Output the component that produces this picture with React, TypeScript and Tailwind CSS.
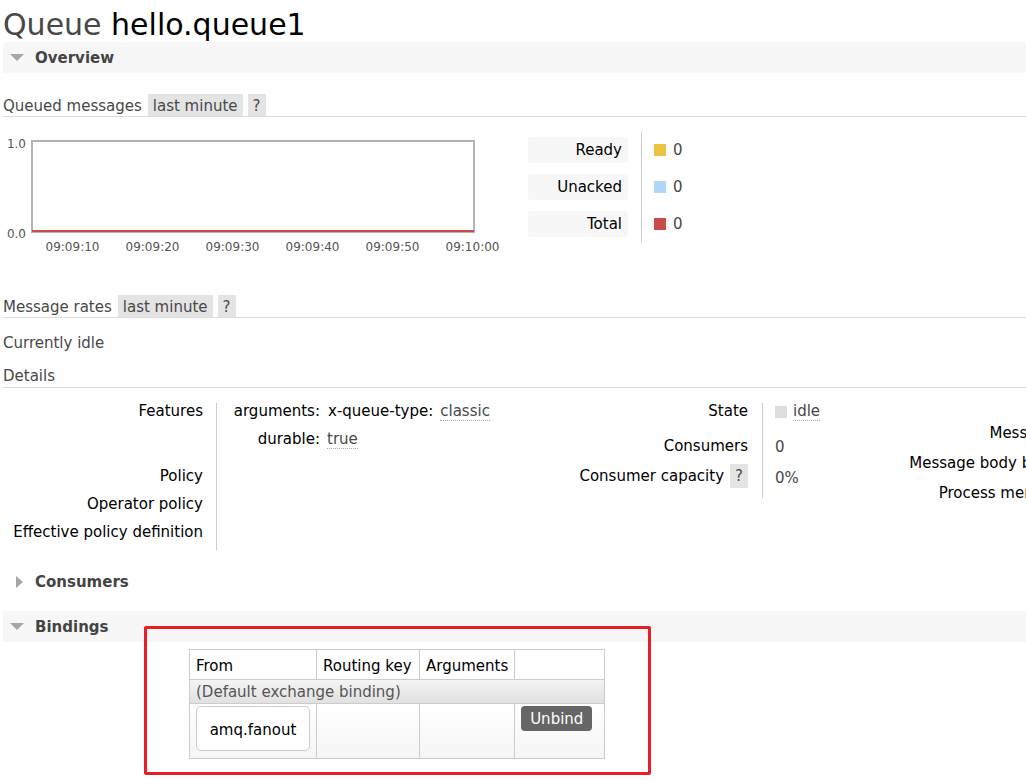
import React from "react";

const legend = [
  { label: "Ready", color: "bg-[#edc240]" },
  { label: "Unacked", color: "bg-[#afd8f8]" },
  { label: "Total", color: "bg-[#cb4b4b]" },
];

const ticks = ["09:09:10", "09:09:20", "09:09:30", "09:09:40", "09:09:50", "09:10:00"];

function DownArrow() {
  return (
    <svg width="14" height="8" viewBox="0 0 14 8" className="shrink-0">
      <path d="M0 0 L14 0 L7 7 Z" fill="#a6a6a6" />
    </svg>
  );
}

function RightArrow() {
  return (
    <svg width="8" height="12" viewBox="0 0 8 12" className="shrink-0">
      <path d="M0 0 L7 6 L0 12 Z" fill="#a6a6a6" />
    </svg>
  );
}

function Badge({ children }: { children: React.ReactNode }) {
  return <span className="h-[22px] bg-[#e4e4e4] px-[5px] leading-[24px] text-[#484848]">{children}</span>;
}

function SectionTitle({ title, open = true, bar = true }: { title: string; open?: boolean; bar?: boolean }) {
  return (
    <div className={`flex h-[31px] items-center pt-[1px] ${bar ? "bg-[#f7f7f7]" : ""}`}>
      <div className={open ? "ml-[7px] w-[25px]" : "ml-[13px] w-[19px]"}>{open ? <DownArrow /> : <RightArrow />}</div>
      <span className="text-[15px] font-bold text-[#444]">{title}</span>
    </div>
  );
}

function RangeRow({ label, mt }: { label: string; mt: string }) {
  return (
    <div className={`${mt} flex h-[23px] items-start gap-[5px] border-b border-[#ddd]`}>
      <span className="mr-[1px] h-[22px] leading-[24px]">{label}</span>
      <Badge>last minute</Badge>
      <Badge>?</Badge>
    </div>
  );
}

function Dotted({ children }: { children: React.ReactNode }) {
  return <span className="border-b border-dotted border-[#aaa] leading-[18px] text-[#484848]">{children}</span>;
}

export default function App() {
  return (
    <div className="relative h-[780px] w-[1026px] overflow-hidden bg-white pl-[3px] font-['DejaVu_Sans',Verdana,sans-serif] text-[15px] text-[#484848]">
      <h1 className="h-[42px] pt-[8px] text-[30px] leading-[34px] whitespace-nowrap">
        Queue <b className="font-normal text-black">hello.queue1</b>
      </h1>

      <SectionTitle title="Overview" />

      <RangeRow label="Queued messages" mt="mt-[21px]" />

      {/* chart + legend */}
      <div className="mt-[13px] flex h-[125px]">
        <svg width="528" height="125" className="-ml-[3px] shrink-0" fontFamily="DejaVu Sans, Verdana, sans-serif">
          <text x="26" y="18" fontSize="12" fill="#545454" textAnchor="end">1.0</text>
          <text x="26" y="108" fontSize="12" fill="#545454" textAnchor="end">0.0</text>
          <rect x="32" y="11" width="442" height="91" fill="white" stroke="#b3b3b3" strokeWidth="2" />
          <line x1="32" y1="101" x2="474" y2="101" stroke="#cb4b4b" strokeWidth="2" />
          {ticks.map((t, i) => (
            <text key={t} x={72.5 + i * 80} y="121" fontSize="12" fill="#545454" textAnchor="middle">
              {t}
            </text>
          ))}
        </svg>
        <div className="flex">
          <div className="mt-[7px] flex flex-col gap-[11px]">
            {legend.map((l) => (
              <div key={l.label} className="h-[26px] w-[100px] rounded-[3px] bg-[#f7f7f7] pr-[6px] text-right leading-[27px] text-black">
                {l.label}
              </div>
            ))}
          </div>
          <div className="ml-[13px] mt-[2px] h-[111px] w-px bg-[#ccc]" />
          <div className="mt-[7px] flex flex-col gap-[11px] pl-[12px]">
            {legend.map((l) => (
              <div key={l.label} className="flex h-[26px] items-center gap-[7px]">
                <span className={`h-[12px] w-[12px] ${l.color}`} />
                <span>0</span>
              </div>
            ))}
          </div>
        </div>
      </div>

      <RangeRow label="Message rates" mt="mt-[40px]" />

      <div className="mt-[15px] leading-[20px]">Currently idle</div>

      <div className="mt-[12px] h-[23px] border-b border-[#ddd] leading-[22px]">Details</div>

      {/* details */}
      <div className="mt-[9px] flex h-[153px] whitespace-nowrap">
        <div className="w-[200px] shrink-0 text-right leading-[28px] text-black">
          <div className="h-[65px]">Features</div>
          <div>Policy</div>
          <div>Operator policy</div>
          <div>Effective policy definition</div>
        </div>
        <div className="ml-[13px] mt-[6px] h-[147px] w-px shrink-0 bg-[#ccc]" />
        <div className="w-[343px] shrink-0 pl-[15px] leading-[28px]">
          <div className="flex">
            <span className="w-[88px] text-right text-black">arguments:</span>
            <span className="ml-[8px] text-black">x-queue-type:</span>
            <span className="ml-[7px]"><Dotted>classic</Dotted></span>
          </div>
          <div className="flex">
            <span className="w-[88px] text-right text-black">durable:</span>
            <span className="ml-[7px]"><Dotted>true</Dotted></span>
          </div>
        </div>

        <div className="w-[188px] shrink-0 text-right leading-[28px] text-black">
          <div className="h-[33px]">State</div>
          <div className="h-[32px] pt-[2px]">Consumers</div>
          <div className="flex h-[28px] items-center justify-end gap-[6px]">
            <span>Consumer capacity</span>
            <span className="h-[24px] bg-[#e4e4e4] px-[5px] leading-[24px] text-[#484848]">?</span>
          </div>
        </div>
        <div className="ml-[14px] mt-[6px] h-[95px] w-px shrink-0 bg-[#ccc]" />
        <div className="w-[140px] shrink-0 pl-[12px] leading-[28px]">
          <div className="flex h-[33px] items-start">
            <span className="mt-[9px] h-[12px] w-[12px] bg-[#ddd]" />
            <span className="ml-[6px] leading-[28px]"><Dotted>idle</Dotted></span>
          </div>
          <div className="h-[32px] pt-[3px]">0</div>
          <div className="h-[28px] pt-[2px]">0%</div>
        </div>

        <div className="w-[160px] shrink-0 pt-[21px] text-right leading-[30px] text-black">
          <div>Messages</div>
          <div>Message body bytes</div>
          <div>Process memory</div>
        </div>
      </div>

      <div className="mt-[16px]">
        <SectionTitle title="Consumers" open={false} bar={false} />
      </div>

      <div className="mt-[14px]">
        <SectionTitle title="Bindings" />
      </div>

      <div className="mt-[7px] pl-[186px]">
        <table className="border-collapse text-left">
          <thead>
            <tr className="h-[30px] text-black">
              <th className="w-[127px] border border-[#ccc] px-[6px] pt-[3px] font-normal">From</th>
              <th className="w-[103px] border border-[#ccc] px-[6px] pt-[3px] font-normal">Routing key</th>
              <th className="w-[95px] border border-[#ccc] px-[6px] pt-[3px] font-normal">Arguments</th>
              <th className="w-[90px] border border-[#ccc] px-[6px] font-normal"></th>
            </tr>
          </thead>
          <tbody>
            <tr className="h-[24px] bg-linear-to-b from-[#f4f4f4] to-[#e0e0e0]">
              <td colSpan={4} className="border border-[#ccc] px-[6px] leading-[22px] text-[#555]">
                (Default exchange binding)
              </td>
            </tr>
            <tr className="h-[55px] bg-linear-to-b from-white to-[#f5f5f5]">
              <td className="border border-[#ccc] px-[6px] pt-[2px] align-top">
                <div className="flex h-[45px] w-[114px] items-center justify-center rounded-[5px] border border-[#ccc] bg-white pt-[3px] text-black">
                  amq.fanout
                </div>
              </td>
              <td className="border border-[#ccc]"></td>
              <td className="border border-[#ccc]"></td>
              <td className="border border-[#ccc] px-[6px] pt-[2px] align-top">
                <button className="h-[25px] w-[71px] rounded-[4px] bg-[#666] pt-[1px] text-[15px] text-white">Unbind</button>
              </td>
            </tr>
          </tbody>
        </table>
      </div>

      <div className="pointer-events-none absolute left-[144px] top-[626px] h-[149px] w-[507px] rounded-[2px] border-[3px] border-[#ec1c24]" />
    </div>
  );
}
